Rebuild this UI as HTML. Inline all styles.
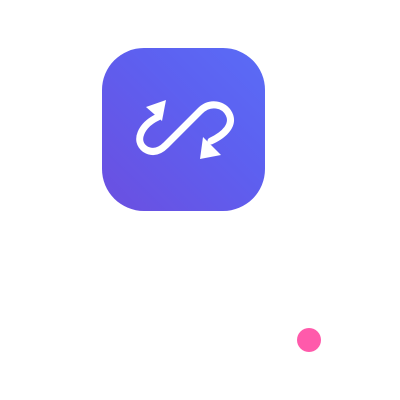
<!DOCTYPE html>
<html><head><style>
html,body{margin:0;padding:0;width:400px;height:400px;background:#fff;overflow:hidden}
.icon{position:absolute;left:102px;top:48px;width:163px;height:163px;border-radius:42px;background:linear-gradient(45deg,#6b4fe0 0%,#5d60f0 60%,#5a6cf6 100%)}
.dot{position:absolute;left:297px;top:328px;width:24px;height:24px;border-radius:50%;background:#ff5aab}
</style></head><body>
<div class="icon"></div>
<svg style="position:absolute;left:0;top:0" width="400" height="400">
<path d="M158,117 C141,125 134,141 145,149 C153,154 160,151 166,145 L200,111 C210,101 224,104 229,114 C234,124 226,134 211,141" fill="none" stroke="#fff" stroke-width="7" stroke-linecap="round"/>
<polygon points="166,100 146,107 162,121" fill="#fff"/>
<polygon points="200,159 203,137 221,155" fill="#fff"/>
</svg>
<div class="dot"></div>
</body></html>
